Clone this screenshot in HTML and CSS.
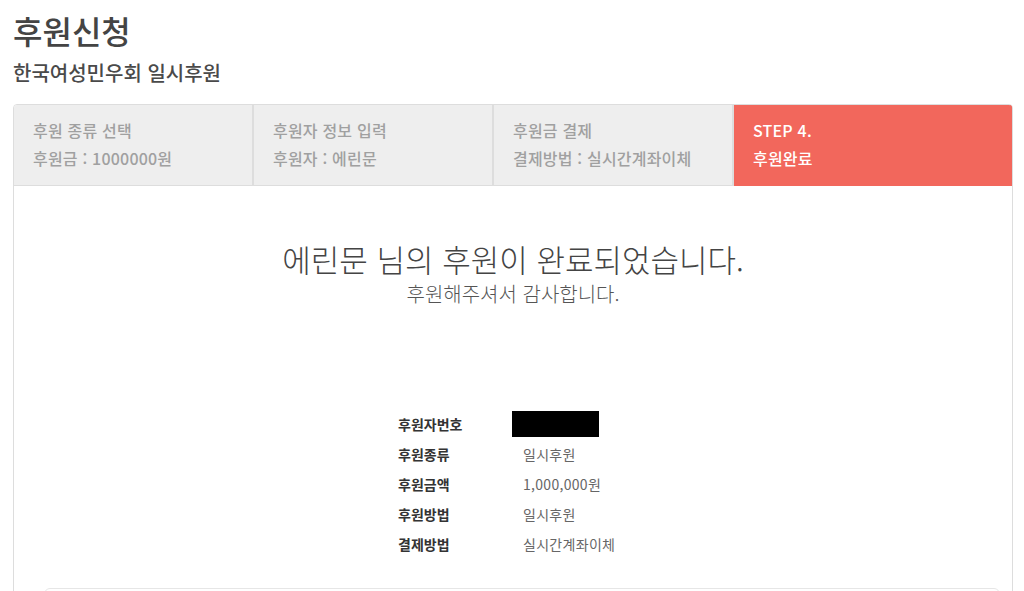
FILE: index.html
```html
<!DOCTYPE html>
<html lang="ko">
<head>
    <meta charset="UTF-8">
    <meta name="viewport" content="width=device-width, initial-scale=1.0">
    <title>후원신청</title>
    <link rel="stylesheet" href="styles.css">
</head>
<body>
    <div class="page">
        <h1 class="title">후원신청</h1>
        <h2 class="subtitle">한국여성민우회 일시후원</h2>

        <div class="panel">
            <div class="steps">
                <div class="step">
                    <div class="step-name">후원 종류 선택</div>
                    <div class="step-value">후원금 : 1000000원</div>
                </div>
                <div class="step">
                    <div class="step-name">후원자 정보 입력</div>
                    <div class="step-value">후원자 : 에린문</div>
                </div>
                <div class="step">
                    <div class="step-name">후원금 결제</div>
                    <div class="step-value">결제방법 : 실시간계좌이체</div>
                </div>
                <div class="step active">
                    <div class="step-name">STEP 4.</div>
                    <div class="step-value">후원완료</div>
                </div>
            </div>

            <div class="result">
                <p class="done">에린문 님의 후원이 완료되었습니다.</p>
                <p class="thanks">후원해주셔서 감사합니다.</p>

                <table class="summary">
                    <tr>
                        <th>후원자번호</th>
                        <td><span class="masked"></span></td>
                    </tr>
                    <tr>
                        <th>후원종류</th>
                        <td>일시후원</td>
                    </tr>
                    <tr>
                        <th>후원금액</th>
                        <td>1,000,000원</td>
                    </tr>
                    <tr>
                        <th>후원방법</th>
                        <td>일시후원</td>
                    </tr>
                    <tr>
                        <th>결제방법</th>
                        <td>실시간계좌이체</td>
                    </tr>
                </table>

                <div class="notice"></div>
            </div>
        </div>
    </div>
</body>
</html>
```

FILE: styles.css
```css
body {
    margin: 0;
    padding: 0;
    background-color: #fff;
    font-family: "Noto Sans CJK KR", "Noto Sans", sans-serif;
    color: #333;
}
.page {
    padding: 0 11px 0 13px;
}
.title {
    margin: 0;
    padding-top: 8px;
    font-size: 32px;
    font-weight: 500;
    line-height: 44px;
    color: #444;
}
.subtitle {
    margin: 7px 0 0;
    font-size: 20px;
    font-weight: 500;
    line-height: 28px;
    color: #4a4a4a;
}
.panel {
    margin-top: 17px;
    border: 1px solid #ddd;
    border-radius: 4px;
    overflow: hidden;
}
.steps {
    display: grid;
    grid-template-columns: 240px 240px 240px 1fr;
    height: 81px;
}
.step {
    background-color: #eee;
    border-right: 2px solid #ddd;
    border-bottom: 1px solid #ddd;
    padding: 11px 19px 0;
    font-size: 16px;
    font-weight: 500;
    color: #a0a0a0;
    line-height: 28px;
    letter-spacing: 0.2px;
}
.step.active {
    background-color: #f2675c;
    border-color: #f2675c;
    color: #fff;
}
.result {
    padding-top: 52px;
    text-align: center;
}
.done {
    margin: 0;
    font-size: 31px;
    font-weight: 300;
    line-height: 42px;
    color: #444;
}
.thanks {
    margin: 1px 0 0;
    font-size: 20px;
    font-weight: 300;
    line-height: 26px;
    color: #555;
}
.summary {
    margin: 102px auto 0;
    border-collapse: collapse;
    text-align: left;
    font-size: 14px;
}
.summary th {
    width: 125px;
    padding: 0;
    height: 30px;
    font-weight: bold;
    color: #333;
}
.summary td {
    width: 105px;
    padding: 0;
    height: 30px;
    color: #666;
    letter-spacing: 0.3px;
}
.masked {
    display: block;
    width: 87px;
    height: 26px;
    margin-left: -11px;
    background-color: #000;
}
.notice {
    margin: 29px 12px 0 30px;
    height: 40px;
    border: 1px solid #e6e6e6;
    border-radius: 6px;
}
```
